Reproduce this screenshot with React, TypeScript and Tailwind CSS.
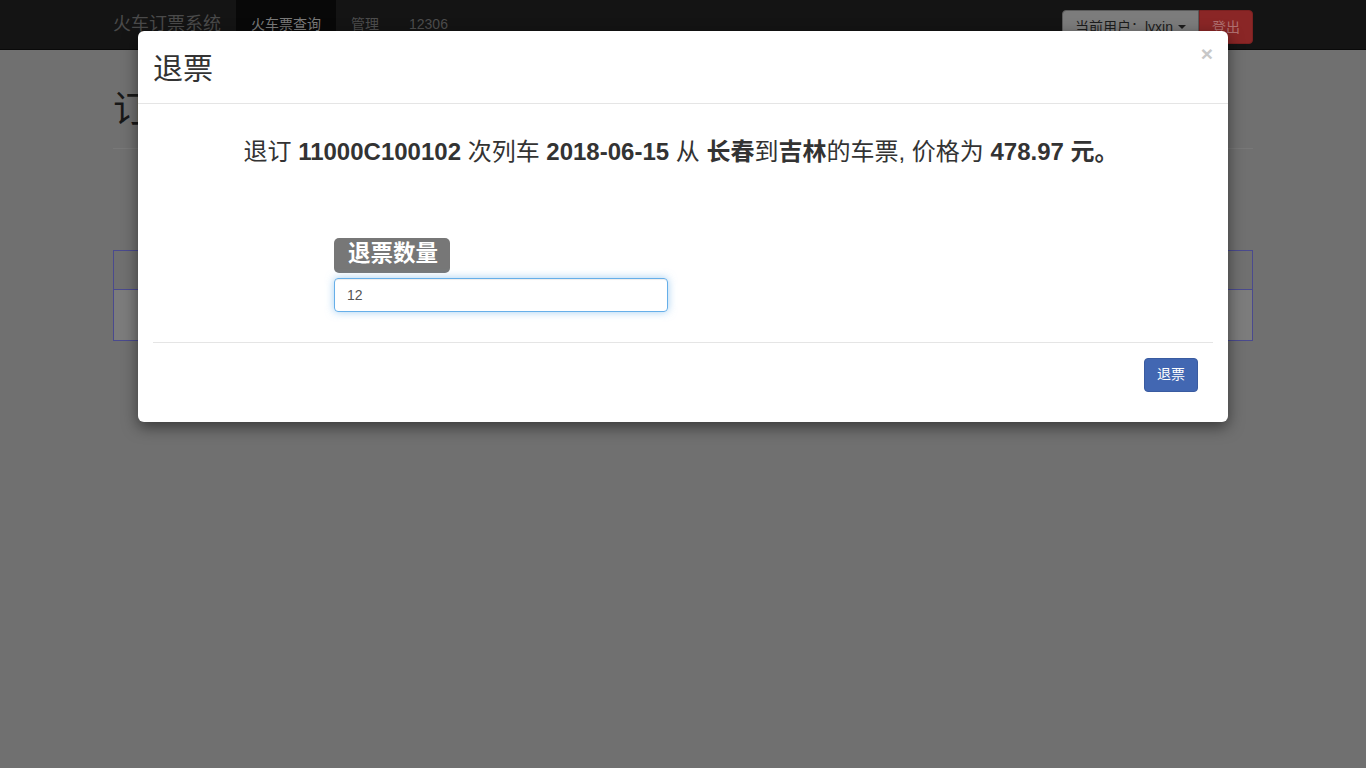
export default function App() {
    return (
        <div className="relative w-[1366px] h-[768px] overflow-hidden bg-[#707070] font-['Liberation_Sans','Noto_Sans_CJK_SC',sans-serif] text-[#333]">
            {/* page under the backdrop, drawn dimmed */}
            <nav className="h-[50px] bg-[#141414] border-b border-[#0a0a0a]">
                <div className="w-[1140px] mx-auto flex items-stretch h-full">
                    <div className="flex items-center text-[18px] text-[#4a4a4a] pr-[15px] w-[123px]">火车订票系统</div>
                    <ul className="flex items-stretch text-[14px]">
                        <li className="flex items-center px-[15px] bg-[#080808] text-[#7a7a7a]">火车票查询</li>
                        <li className="flex items-center px-[15px] text-[#4d4d4d]">管理</li>
                        <li className="flex items-center px-[15px] text-[#4d4d4d]">12306</li>
                    </ul>
                    <div className="ml-auto flex items-start pt-[10px]">
                        <div className="h-[34px] flex items-center gap-[5px] px-[12px] bg-[#7c7c7c] border border-[#5a5a5a] rounded-l-[4px] text-[14px] text-[#1c1c1c]">
                            当前用户：lyxin
                            <span className="inline-block w-0 h-0 border-x-[4px] border-x-transparent border-t-[4px] border-t-[#1c1c1c]" />
                        </div>
                        <div className="h-[34px] flex items-center px-[12px] bg-[#8a2626] border border-[#7a2020] rounded-r-[4px] text-[14px] text-[#b07070]">登出</div>
                    </div>
                </div>
            </nav>
            <div className="w-[1140px] mx-auto">
                <h1 className="text-[36px] leading-[40px] text-[#181818] mt-[40px] pb-[18px] border-b border-[#787878]">订单管理</h1>
                <table className="mt-[101px] w-full border-collapse">
                    <tbody>
                        <tr className="h-[39px]">
                            <td className="border border-[#4a4a8e]" />
                        </tr>
                        <tr className="h-[51px] bg-[#7c7c7c]">
                            <td className="border border-[#4a4a8e]" />
                        </tr>
                    </tbody>
                </table>
            </div>

            {/* modal */}
            <div className="absolute left-[138px] top-[31px] w-[1090px] bg-white rounded-[6px] shadow-[0_5px_15px_rgba(0,0,0,0.5)]">
                <div className="h-[73px] flex items-center justify-between px-[15px] border-b border-[#e5e5e5]">
                    <h2 className="text-[30px] leading-[33px] text-[#333] pt-[2px]">退票</h2>
                    <span className="self-start mt-[12px] text-[21px] font-bold leading-none text-[#c8c8c8]">×</span>
                </div>
                <div className="px-[15px] pt-[35px] pb-[30px]">
                    <h3 className="text-[24px] leading-[26px] text-center pr-[4px]">
                        退订 <b>11000C100102</b> 次列车 <b>2018-06-15</b> 从 <b>长春</b>到<b>吉林</b>的车票, 价格为 <b>478.97 元。</b>
                    </h3>
                    <div className="ml-[181px] mt-[73px] flex flex-col items-start">
                        <span className="inline-block bg-[#777] text-white font-bold text-[22.5px] leading-none pl-[14px] pr-[12px] pt-[5px] pb-[7px] rounded-[5px]">退票数量</span>
                        <input
                            defaultValue="12"
                            className="mt-[5px] w-[334px] h-[34px] px-[12px] text-[14px] text-[#555] border border-[#66afe9] rounded-[4px] outline-none shadow-[inset_0_1px_1px_rgba(0,0,0,0.075),0_0_8px_rgba(102,175,233,0.6)]"
                        />
                    </div>
                    <div className="mt-[30px] border-t border-[#e5e5e5] pt-[15px] pr-[15px] flex justify-end">
                        <button className="h-[34px] px-[12px] text-[14px] text-white bg-[#4267b2] border border-[#3a5ba0] rounded-[4px]">退票</button>
                    </div>
                </div>
            </div>
        </div>
    );
}
